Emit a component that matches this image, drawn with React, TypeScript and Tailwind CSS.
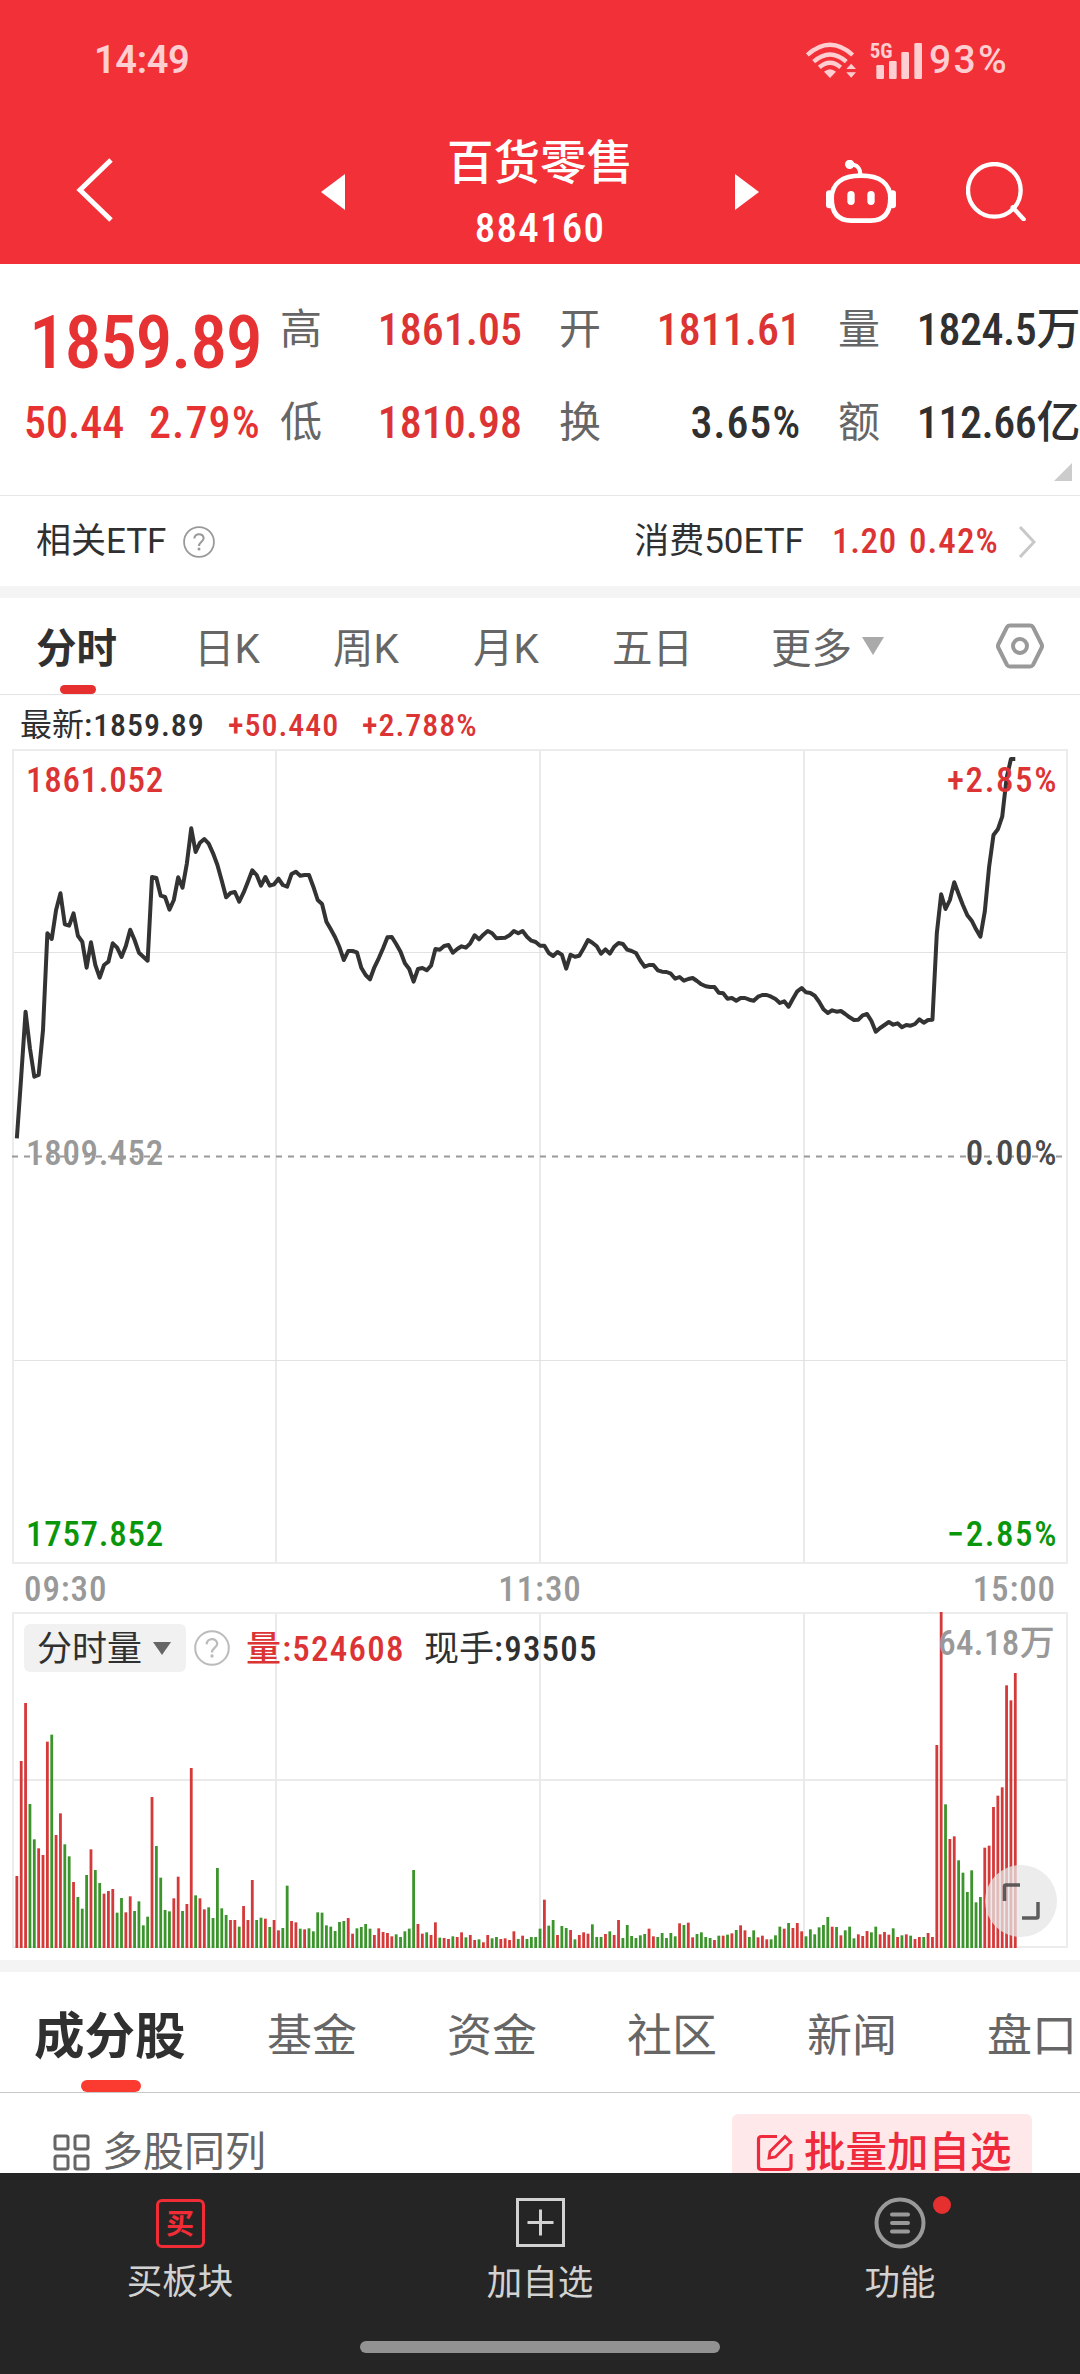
const QUOTE_COLUMNS = [
  [
    { label: '高', value: '1861.05', color: 'text-[#dc3434]' },
    { label: '低', value: '1810.98', color: 'text-[#dc3434]' },
  ],
  [
    { label: '开', value: '1811.61', color: 'text-[#dc3434]' },
    { label: '换', value: '3.65%', color: 'text-[#303030] tracking-[0.02em]' },
  ],
  [
    { label: '量', value: '1824.5万', color: 'text-[#303030] tracking-[-0.01em]' },
    { label: '额', value: '112.66亿', color: 'text-[#303030] tracking-[-0.01em]' },
  ],
];

const PERIOD_TABS = [
  { label: '日K', width: 'w-[139px]' },
  { label: '周K', width: 'w-[140px]' },
  { label: '月K', width: 'w-[139px]' },
  { label: '五日', width: 'w-[159px]' },
];

const SECTION_TABS = ['基金', '资金', '社区', '新闻', '盘口'];

// One point per trading minute, in thirds of a pixel below the top of the price chart
const PRICES = [
  1195, 1010, 815, 925, 1010, 1005, 870, 580, 597, 510, 460, 553, 557, 520, 587, 605, 683, 607, 675, 713,
  675, 665, 610, 623, 651, 618, 569, 600, 638, 650, 662, 411, 414, 467, 471, 509, 480, 412, 443, 370,
  265, 336, 308, 297, 311, 340, 375, 422, 472, 459, 456, 485, 458, 425, 391, 405, 437, 411, 437, 433,
  416, 435, 440, 402, 395, 407, 405, 405, 440, 480, 492, 545, 568, 592, 622, 660, 633, 633, 637, 683,
  705, 718, 682, 655, 625, 592, 591, 612, 635, 670, 687, 725, 687, 684, 691, 677, 627, 629, 618, 615,
  638, 627, 619, 623, 610, 586, 598, 584, 573, 580, 595, 594, 593, 586, 573, 580, 573, 590, 602, 606,
  617, 617, 639, 648, 636, 644, 686, 644, 650, 647, 625, 600, 608, 619, 641, 628, 641, 620, 609, 612,
  629, 633, 639, 662, 680, 675, 675, 691, 695, 696, 701, 716, 711, 722, 717, 714, 723, 733, 739, 741,
  741, 758, 760, 776, 774, 782, 774, 774, 779, 782, 770, 765, 765, 770, 777, 789, 784, 800, 776, 754,
  744, 757, 759, 767, 785, 808, 819, 811, 815, 813, 822, 832, 840, 839, 826, 822, 843, 875, 864, 855,
  846, 854, 850, 862, 855, 857, 852, 838, 848, 840, 839, 580, 463, 507, 480, 427, 462, 496, 526, 542,
  568, 590, 515, 380, 285, 268, 230, 115, 57, 57,
];

// Volume per minute scaled so that 1008 is the axis maximum, negative when the price fell
const VOLUMES = [
  216, 561, 735, -432, -326, 299, 279, 619, -640, 339, 404, -311, -275, 198, -153, -118, -219, 296, -234, -195,
  163, 171, 177, -106, -150, 107, 155, -111, -140, -68, -94, 453, -306, -211, -114, -110, 149, 214, -111, 132,
  540, -158, 149, 116, -122, -90, -240, -119, -99, 84, 84, -64, 126, 84, 204, -84, -91, 88, -63, 84,
  53, -60, -187, 81, 77, -58, 56, -59, -50, -107, -106, -68, -64, -51, -78, -81, 90, 43, -59, -63,
  -72, -58, 39, 59, 48, 45, 35, -41, -33, -50, -58, -234, 72, 43, -47, 39, 77, -31, 30, 27,
  -35, 33, 47, -32, 39, 24, -26, 17, 39, -29, -33, 27, 29, 24, 50, -27, 37, -27, -33, -33,
  -58, 145, -67, -84, 39, -66, -60, 54, -26, 39, 47, 43, -71, -33, -33, 42, -50, 39, 84, -30,
  -69, -36, -30, -38, -42, 58, 35, -33, -45, -30, -45, -35, 74, -69, 76, 32, -42, -47, -33, -30,
  24, -37, 37, -40, 44, -54, 68, 53, -33, -53, 32, 37, 26, -26, -38, -64, 58, -75, 60, 75,
  50, -35, -56, -41, -62, -69, -93, 64, -63, 38, -53, -64, -29, 41, 36, 51, -47, -64, 41, 48,
  40, -59, 33, -38, 41, -37, 27, 33, -33, 45, 33, 609, 1008, -431, 327, 335, -263, -226, -168, -233,
  -137, -153, 301, 307, 423, 457, 482, 788, 743, 825,
];

const minuteX = (i: number) => 4.85 + i * 4.36;

function StatusBar() {
  return (
    <div className="flex h-[120px] items-center pl-[94px] font-['Roboto'] text-[38px] font-medium text-[#ffced1]">
      <span className="w-[712px] font-semibold tracking-[-0.01em]">14:49</span>
      <svg viewBox="78 64 150 108" className="h-9 w-[50px]" fill="none" stroke="currentColor">
        <path d="M82 103 Q150 42 218 103 M101 123 Q150 80 199 123 M118 140 Q150 112 182 140" strokeWidth="13" />
        <path d="M132 153 Q150 138 168 153 L150 172z M199 145h29l-14.500 -16z M199 155h29l-14.500 16z" fill="currentColor" stroke="none" />
      </svg>
      <svg viewBox="270 60 159 114" className="-mt-px ml-[14px] h-[38px] w-[53px] overflow-visible" fill="currentColor">
        <text x="269" y="110" fontSize="63" className="font-['Roboto_Condensed'] font-bold">5G</text>
        <rect x="289" y="132" width="23" height="42" rx="4" />
        <rect x="327" y="120" width="23" height="54" rx="4" />
        <rect x="364" y="93" width="23" height="81" rx="4" />
        <rect x="403" y="66" width="23" height="108" rx="4" />
      </svg>
      <span className="ml-[6px] text-[39px] tracking-[0.06em]">93%</span>
    </div>
  );
}

function Header() {
  return (
    <header className="h-[264px] shrink-0 bg-[#f23038] text-white">
      <StatusBar />
      <div className="flex h-[142px] items-center pl-[76px]">
        <svg viewBox="0 0 38 64" className="-mt-0.5 h-16 w-[38px]" fill="none" stroke="currentColor" strokeWidth="5">
          <path d="M35 2 L4 32 L35 62" />
        </svg>
        <svg viewBox="0 0 24 36" className="mt-0.5 ml-[207px] h-9 w-6" fill="currentColor">
          <path d="M24 0v36L0 18z" />
        </svg>
        <div className="flex w-[390px] flex-col items-center gap-3 self-start pt-[15px]">
          <h1 className="text-[46.5px] leading-[56px] font-medium">百货零售</h1>
          <p className="text-[41px] leading-[50px] font-medium tracking-[0.03em]">884160</p>
        </div>
        <svg viewBox="0 0 24 36" className="mt-0.5 h-9 w-6" fill="currentColor">
          <path d="M0 0v36L24 18z" />
        </svg>
        <svg viewBox="138 417 210 189" className="ml-[67px] h-[63px] w-[70px]" fill="none" stroke="currentColor">
          <path d="M243 464C300 464 331 488 331 532C331 580 308 599 272 599H214C178 599 155 580 155 532C155 488 186 464 243 464z" strokeWidth="14" />
          <path d="M210 430C234 431 241 443 241 462" strokeWidth="12" />
          <g fill="currentColor" stroke="none">
            <circle cx="209" cy="430" r="14" />
            <rect x="138" y="508" width="20" height="54" rx="10" />
            <rect x="328" y="508" width="20" height="54" rx="10" />
            <rect x="202" y="510" width="22" height="42" rx="11" />
            <rect x="262" y="510" width="22" height="42" rx="11" />
          </g>
        </svg>
        <svg viewBox="558 426 180 177" className="ml-[70px] h-[59px] w-[60px]" fill="none" stroke="currentColor" strokeWidth="13">
          <circle cx="643" cy="511" r="79" />
          <path d="M698 562L731 598" strokeLinecap="round" />
        </svg>
      </div>
    </header>
  );
}

function Quote() {
  return (
    <section className="relative flex h-[232px] shrink-0 border-b border-[#e6e6e6]">
      <div className="flex w-[280px] flex-col gap-[10px] pt-[39px] text-[#e63232]">
        <p className="pl-[29px] text-[74px] leading-[80px] font-medium tracking-[-0.02em]">1859.89</p>
        <p className="flex pl-6 text-[44px] leading-[60px] font-medium">
          <span className="w-[125px]">50.44</span>
          <span className="tracking-[0.025em]">2.79%</span>
        </p>
      </div>
      <div className="flex gap-[37px] pt-[36px]">
        {QUOTE_COLUMNS.map((column) => (
          <div key={column[0].label} className="flex w-[242px] flex-col gap-[33px] text-[44px] leading-[60px] whitespace-nowrap">
            {column.map((item) => (
              <div key={item.label} className="flex justify-between">
                <span className="text-[42px] text-[#666]">{item.label}</span>
                <span className={`font-medium ${item.color}`}>{item.value}</span>
              </div>
            ))}
          </div>
        ))}
      </div>
      <svg viewBox="0 0 18 18" className="absolute right-2 bottom-[14px] size-[18px]" fill="#ccc">
        <path d="M18 0v18H0z" />
      </svg>
    </section>
  );
}

function HelpIcon({ size, color }: { size: string; color: string }) {
  return (
    <svg viewBox="0 0 36 36" className={`${size} ${color}`} fill="none" stroke="currentColor" strokeWidth="2">
      <circle cx="18" cy="18" r="16.800" />
      <path d="M12.800 14.200C12.800 7.600 23.200 7.600 23.200 13.800C23.200 17.500 18 18 18 22.500" strokeWidth="2.300" />
      <circle cx="18" cy="26" r="1.700" fill="currentColor" stroke="none" />
    </svg>
  );
}

function RelatedEtf() {
  return (
    <section className="flex h-[90px] shrink-0 items-center pt-0.5 pr-[44px] pl-9 text-[35px] text-[#303030]">
      <span className="font-['Roboto','Noto_Sans_CJK_SC',sans-serif]">相关ETF</span>
      <HelpIcon size="ml-[17px] size-8" color="text-[#999]" />
      <span className="ml-auto font-['Roboto','Noto_Sans_CJK_SC',sans-serif]">消费50ETF</span>
      <span className="ml-[28px] font-medium tracking-[0.02em] text-[#dc3434]">1.20</span>
      <span className="ml-3 w-[93px] font-medium tracking-[0.03em] text-[#dc3434]">0.42%</span>
      <svg viewBox="0 0 18 32" className="ml-[16px] h-8 w-[18px]" fill="none" stroke="#c8c8c8" strokeWidth="3">
        <path d="M2 1L16 16L2 31" />
      </svg>
    </section>
  );
}

function PeriodTabs() {
  return (
    <nav className="flex h-[97px] shrink-0 items-center border-b border-[#e4e4e4] pl-9 font-['Roboto','Noto_Sans_CJK_SC',sans-serif] text-[40.5px] leading-[60px] text-[#666]">
      <div className="relative flex h-full w-[158px] items-center pt-[5px] font-bold text-[#303030]">
        分时
        <span className="absolute bottom-0 left-6 h-[9px] w-9 rounded-full bg-[#e63030]" />
      </div>
      {PERIOD_TABS.map((tab) => (
        <span key={tab.label} className={`pt-[5px] ${tab.width}`}>{tab.label}</span>
      ))}
      <span className="pt-[5px]">更多</span>
      <svg viewBox="0 0 22 18" className="ml-[10px] h-[18px] w-[22px]" fill="#aaa">
        <path d="M0 0h22L11 18z" />
      </svg>
      <svg viewBox="0 0 48 46" className="ml-[112px] h-[46px] w-12" fill="none" stroke="#999" strokeWidth="4">
        <path d="M14 2.500H34Q36 2.500 37 4L45.500 21Q46.500 23 45.500 25L37 42Q36 43.500 34 43.500H14Q12 43.500 11 42L2.500 25Q1.500 23 2.500 21L11 4Q12 2.500 14 2.500z" />
        <circle cx="24" cy="23" r="7" />
      </svg>
    </nav>
  );
}

function PriceChart() {
  const points = PRICES.map((v, i) => `${minuteX(i).toFixed(2)},${(v / 3 - 9).toFixed(1)}`).join(' ');
  return (
    <div className="relative mx-3 h-[815px] shrink-0 text-[35px] leading-none font-medium">
      <svg viewBox="0 0 1056 815" className="block h-[815px] w-[1056px]" fill="none">
        <path d="M264 0V815M528 0V815M792 0V815" stroke="#eaeaea" strokeWidth="2" />
        <path d="M0 203.500H1056M0 611.500H1056" stroke="#e2e2e2" />
        <rect x="1" y="1" width="1054" height="813" stroke="#ececec" strokeWidth="2" />
        <path d="M0 407.500H1050" stroke="#999" strokeWidth="1.800" strokeDasharray="6 6" />
        <polyline points={points} stroke="#333" strokeWidth="4" strokeLinejoin="round" />
      </svg>
      <span className="absolute top-[14px] left-[14px] tracking-[0.02em] text-[#dc3434]">1861.052</span>
      <span className="absolute top-[14px] right-[10px] tracking-[0.045em] text-[#dc3434]">+2.85%</span>
      <span className="absolute top-[387px] left-[14px] tracking-[0.02em] text-[#999]">1809.452</span>
      <span className="absolute top-[387px] right-[10px] tracking-[0.045em] text-[#4a4a4a]">0.00%</span>
      <span className="absolute bottom-[12px] left-[14px] tracking-[0.02em] text-[#0a960a]">1757.852</span>
      <span className="absolute right-[10px] bottom-[12px] tracking-[0.045em] text-[#0a960a]">−2.85%</span>
    </div>
  );
}

function VolumeChart() {
  return (
    <div className="relative mx-3 h-[336px] shrink-0 text-[35px]">
      <svg viewBox="0 0 1056 336" className="block h-[336px] w-[1056px]" fill="none">
        <path d="M264 0V336M528 0V336M792 0V336M0 168H1056" stroke="#eaeaea" strokeWidth="2" />
        <rect x="1" y="1" width="1054" height="334" stroke="#ececec" strokeWidth="2" />
        {VOLUMES.map((v, i) => (
          <rect
            key={i}
            x={minuteX(i) - 1.4}
            y={336 - Math.abs(v) / 3}
            width="2.800"
            height={Math.abs(v) / 3}
            fill={v < 0 ? '#3c942c' : '#d43a3a'}
          />
        ))}
      </svg>
      <div className="absolute top-3 left-3 flex h-12 items-center leading-[48px] text-[#303030]">
        <button className="flex h-12 w-[162px] items-center rounded-md bg-[#f1f1f1] pl-[13px]">
          <span className="pt-[3px]">分时量</span>
          <svg viewBox="0 0 18 13" className="ml-[11px] h-[13px] w-[18px]" fill="#666">
            <path d="M0 0h18L9 13z" />
          </svg>
        </button>
        <HelpIcon size="ml-2 size-9" color="text-[#bbb]" />
        <span className="ml-4 w-[178px] pt-[3px] font-medium tracking-[0.035em] text-[#dc3434]">量:524608</span>
        <span className="pt-[3px] font-medium tracking-[0.035em]"><span className="font-normal tracking-normal">现手</span>:93505</span>
      </div>
      <span className="absolute top-[13px] right-[13px] leading-[38px] font-medium tracking-[0.01em] text-[#999]">64.18万</span>
      <button className="absolute right-[11px] bottom-[11px] flex size-[72px] items-center justify-center rounded-full bg-[#e6e6e6]/75">
        <svg viewBox="0 0 38 38" className="size-[38px]" fill="none" stroke="#444" strokeOpacity="0.85" strokeWidth="3.500">
          <path d="M18 3H4Q2.500 3 2.500 4.500V19M36 20V34.500Q36 36 34.500 36H20" />
        </svg>
      </button>
    </div>
  );
}

function SectionTabs() {
  return (
    <nav className="flex h-[121px] shrink-0 overflow-hidden border-b border-[#c8c8c8] pl-[34px] text-[45px] leading-[129px] whitespace-nowrap text-[#666]">
      <div className="relative w-[233px] shrink-0 text-[50.5px] font-bold text-[#303030]">
        成分股
        <span className="absolute top-[108px] left-[47px] h-3 w-[60px] rounded-full bg-[#fb3a30]" />
      </div>
      {SECTION_TABS.map((tab) => (
        <span key={tab} className="w-[180px] shrink-0">{tab}</span>
      ))}
    </nav>
  );
}

function ListToolbar() {
  return (
    <div className="flex h-20 shrink-0 items-start justify-between overflow-hidden pt-[21px] pr-12 pl-[53px] text-[41px]">
      <div className="flex h-[78px] items-center gap-[11px] text-[#666]">
        <svg viewBox="0 0 38 38" className="size-[38px]" fill="none" stroke="currentColor" strokeWidth="3">
          <rect x="2" y="2" width="13" height="13" rx="2" />
          <rect x="22" y="2" width="13" height="13" rx="2" />
          <rect x="2" y="22" width="13" height="13" rx="2" />
          <rect x="22" y="22" width="13" height="13" rx="2" />
        </svg>
        多股同列
      </div>
      <button className="flex h-[78px] w-[300px] items-center rounded-md bg-[#ffe8ea] pl-6 text-[41.5px] font-medium whitespace-nowrap text-[#ee2a3c]">
        <svg viewBox="0 0 38 38" className="mr-[10px] size-[38px] shrink-0" fill="none" stroke="currentColor" strokeWidth="3.200">
          <path d="M21 2.500H5.500Q2.500 2.500 2.500 5.500V32.500Q2.500 35.500 5.500 35.500H32Q35 35.500 35 32.500V20" />
          <path d="M13 24L14 17.500L29 2.500L34.500 8L19.500 23z" strokeWidth="2.800" />
        </svg>
        批量加自选
      </button>
    </div>
  );
}

function BottomNav() {
  return (
    <footer className="flex h-[201px] shrink-0 flex-col items-center bg-[#252525] text-[35.5px] leading-[44px] text-[#d2d2d2]">
      <div className="grid h-[168px] w-full grid-cols-3">
        <div className="flex flex-col items-center pt-[26px]">
          <span className="flex size-[49px] items-center justify-center rounded-md border-3 border-[#f02c36] text-[28px] leading-none font-bold text-[#f02c36]">
            <span className="pt-0.5">买</span>
          </span>
          <span className="mt-3">买板块</span>
        </div>
        <div className="flex flex-col items-center pt-[25px]">
          <svg viewBox="0 0 49 49" className="size-[49px]" fill="none" stroke="currentColor" strokeWidth="3">
            <path d="M1.500 1.500H47.500V47.500H1.500zM24.500 11.500V37.500M11.500 24.500H37.500" />
          </svg>
          <span className="mt-[14px]">加自选</span>
        </div>
        <div className="flex flex-col items-center pt-6">
          <div className="relative">
            <svg viewBox="0 0 52 52" className="size-[52px]" fill="none" stroke="#999" strokeWidth="4">
              <circle cx="26" cy="26" r="23.500" />
              <path d="M18 17.500H34M18 26H34M18 34.500H34" strokeLinecap="round" />
            </svg>
            <span className="absolute -top-px -right-[25px] size-[18px] rounded-full bg-[#e63030]" />
          </div>
          <span className="mt-3">功能</span>
        </div>
      </div>
      <div className="h-3 w-[360px] rounded-full bg-[#929292]" />
    </footer>
  );
}

export default function App() {
  return (
    <div className="flex h-[2374px] w-[1080px] flex-col overflow-hidden bg-white font-['Roboto_Condensed','Noto_Sans_CJK_SC',sans-serif]">
      <Header />
      <Quote />
      <RelatedEtf />
      <div className="h-3 shrink-0 bg-[#f4f4f4]" />
      <PeriodTabs />
      <div className="flex h-[54px] shrink-0 items-center pt-1.5 pl-5 text-[32px] font-medium tracking-[0.03em] text-[#303030]">
        <span className="w-[208px]"><span className="font-normal tracking-normal">最新</span>:1859.89</span>
        <span className="w-[134px] text-[#dc3434]">+50.440</span>
        <span className="text-[#dc3434]">+2.788%</span>
      </div>
      <PriceChart />
      <div className="grid h-12 shrink-0 grid-cols-3 items-center px-6 text-[35px] font-medium tracking-[0.025em] text-[#999]">
        <span>09:30</span>
        <span className="text-center">11:30</span>
        <span className="text-right">15:00</span>
      </div>
      <VolumeChart />
      <div className="mt-3 h-3 shrink-0 bg-[#f4f4f4]" />
      <SectionTabs />
      <ListToolbar />
      <BottomNav />
    </div>
  );
}
